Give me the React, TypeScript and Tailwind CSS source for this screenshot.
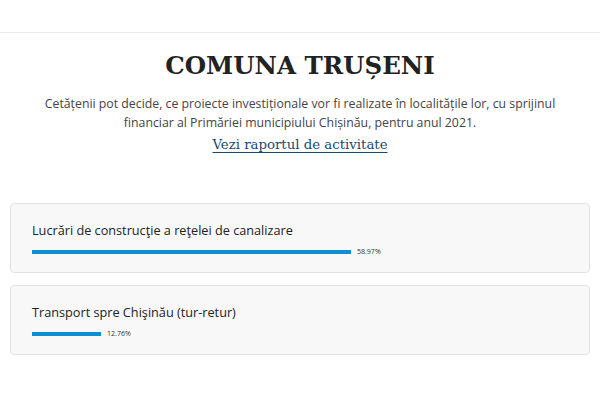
import React from "react";

const items = [
  { title: "Lucrări de construcţie a reţelei de canalizare", pct: 58.97 },
  { title: "Transport spre Chişinău (tur-retur)", pct: 12.76 },
];

export default function App() {
  return (
    <div className="w-[600px] h-[400px] bg-white overflow-hidden">
      <div className="h-[33px] border-b border-[#ececec]" />
      <div className="flex flex-col items-center pt-[13px]">
        <h1 className="font-['DejaVu_Serif',serif] font-bold text-[24.5px] leading-[40px] text-[#222]">
          COMUNA TRUȘENI
        </h1>
        <p className="mt-[8px] text-center whitespace-nowrap font-['Open_Sans',sans-serif] text-[12.3px] leading-[19px] text-[#444]">
          Cetățenii pot decide, ce proiecte investiționale vor fi realizate în localitățile lor, cu sprijinul
          <br />
          financiar al Primăriei municipiului Chișinău, pentru anul 2021.
        </p>
        <a className="mt-[3px] font-['DejaVu_Serif',serif] text-[13.3px] leading-[20px] text-[#1a4a6b] underline underline-offset-[3px]">
          Vezi raportul de activitate
        </a>
      </div>
      <div className="mt-[48px] px-[10px] flex flex-col gap-[12px]">
        {items.map((it) => (
          <div
            key={it.title}
            className="h-[70px] rounded-[4px] border border-[#e2e2e2] bg-[#f8f8f8] px-[21px] pt-[16px]"
          >
            <div className="font-['Open_Sans',sans-serif] text-[12.7px] leading-[20px] text-[#222]">
              {it.title}
            </div>
            <div className="mt-[8px] flex items-center w-[541px]">
              <div className="h-[4px] bg-[#0c8fd3]" style={{ width: `${it.pct}%` }} />
              <span className="ml-[6px] font-['Open_Sans',sans-serif] text-[7px] leading-[8px] text-[#333]">
                {it.pct}%
              </span>
            </div>
          </div>
        ))}
      </div>
    </div>
  );
}
